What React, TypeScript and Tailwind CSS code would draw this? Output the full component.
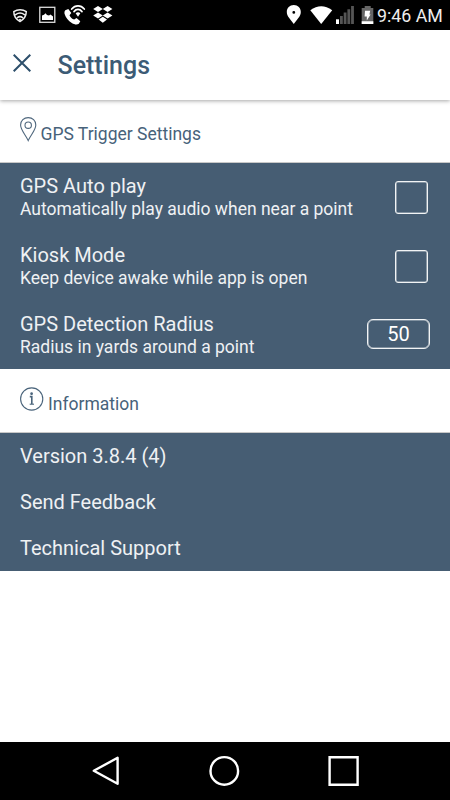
import React from "react";

function StatusBar() {
  return (
    <div className="flex h-[30px] shrink-0 bg-black">
      <svg width="375" height="30" viewBox="0 0 375 30" className="shrink-0">
        {/* shield with signal arcs */}
        <g fill="none" stroke="#eee" strokeWidth="1.5" strokeLinecap="round">
          <path d="M13.8 11.6C17.5 9 22.7 9 26.3 11.6C26.2 16 24.2 19.4 20 21.5C15.8 19.4 13.8 16 13.8 11.6Z" />
          <path d="M15.6 14.6C18.3 12.7 21.7 12.7 24.4 14.6M17.4 17.6C19 16.4 21 16.4 22.6 17.6" />
        </g>
        <circle cx="20" cy="19.7" r="1" fill="#eee" />
        {/* picture */}
        <rect x="39.8" y="7.3" width="15" height="15" fill="none" stroke="#ddd" strokeWidth="1.3" />
        <path d="M42 20V15.5L44 14.7L45.5 13.2L47 15L49 15.5L50.5 14.5L53 16.5V20Z" fill="#fff" />
        {/* wifi call */}
        <path d="M65.3 10.2L68.3 9L71.3 13L69.5 15.2C70.5 17.3 72 18.8 74.2 19.6L76.5 18L80.3 21.2L78.8 23.8C77 25 74.5 24.6 71.8 23C68.5 21 65.5 17.3 64.6 14C64.3 12.4 64.5 11 65.3 10.2Z" fill="#fff" />
        <g fill="none" stroke="#fff" strokeWidth="1.7" strokeLinecap="round">
          <path d="M71.7 9C75.2 4.8 80.8 4.8 84.3 9M74 11.6C76.3 8.7 79.7 8.7 82 11.6" />
        </g>
        <path d="M75.6 13.3Q78 11.2 80.4 13.3L78 16.8Z" fill="#fff" />
        {/* dropbox */}
        <path d="M98 6L102.8 9L98 12L93.2 9ZM107.6 6L112.4 9L107.6 12L102.8 9ZM98 12.4L102.8 15.4L98 18.4L93.2 15.4ZM107.6 12.4L112.4 15.4L107.6 18.4L102.8 15.4ZM102.8 16.7L107 19.6L102.8 22.7L98.6 19.6Z" fill="#fff" />
        {/* location */}
        <path fillRule="evenodd" d="M293.8 5C289.7 5 286.8 8 286.8 11.9C286.8 16.5 291 19.5 293.8 24C296.6 19.5 300.8 16.5 300.8 11.9C300.8 8 297.9 5 293.8 5ZM293.8 11A1.4 1.4 0 1 1 293.8 13.8A1.4 1.4 0 1 1 293.8 11Z" fill="#fff" />
        {/* wifi */}
        <path d="M310.3 10.3Q321.2 2 332.2 10.3L321.2 24Z" fill="#fff" />
        {/* cell signal */}
        <path d="M336 19.3h3V24h-3Z" fill="#fff" />
        <path d="M340 16h2.8v8H340ZM343.7 12.6h2.8V24h-2.8ZM347.4 9.3h2.8V24h-2.8ZM351.1 6h2.8v18h-2.8Z" fill="#555" />
        {/* charging battery */}
        <path d="M364.7 6h6v2h2.6v16h-11.6V8h3Z" fill="#666" />
        <path d="M361.7 21.2h11.6V24h-11.6ZM365 10.7h5.2l-.8 3.8h1.2l-3.8 6v-4h-2.2Z" fill="#fff" />
      </svg>
      <span className="whitespace-nowrap pl-[2px] text-[17.8px] leading-[32px] text-[#eee]">9:46 AM</span>
    </div>
  );
}

function Row({ title, sub, children }: { title: string; sub: string; children: React.ReactNode }) {
  return (
    <div className="flex h-[69px] items-start justify-between pl-5 pr-[20px] pt-[10.8px]">
      <div className="whitespace-nowrap text-[#eff1f3]">
        <div className="text-[20px] leading-[24px]">{title}</div>
        <div className="text-[17.5px] leading-[23px]">{sub}</div>
      </div>
      {children}
    </div>
  );
}

function Checkbox() {
  return <div className="mr-[2px] mt-[7px] size-[33px] rounded-[3px] border border-[#f2f4f5] shadow-[inset_0_0_0_0.6px_#f2f4f5b0]" />;
}

export default function App() {
  return (
    <div className="flex h-[800px] w-[450px] flex-col overflow-hidden bg-white font-['Roboto',sans-serif]">
      <StatusBar />
      <header className="z-10 flex h-[70px] shrink-0 items-center bg-white shadow-[0_1px_4px_rgba(0,0,0,0.35)]">
        <svg width="18" height="18" viewBox="0 0 18 18" className="ml-[13px] mt-[-4px]">
          <path d="M.7 .7L17.3 17.3M17.3 .7L.7 17.3" stroke="#2d4f6b" strokeWidth="2" />
        </svg>
        <h1 className="ml-[26.5px] mt-px text-[25px] font-medium leading-[30px] text-[#3c5b75]">Settings</h1>
      </header>
      <section className="flex h-[63px] shrink-0 border-b border-[#c8c8c8] pl-5 pt-[17px]">
        <svg width="17" height="25" viewBox="0 0 17 25" fill="none" stroke="#4f677d" strokeWidth="1.1">
          <path d="M8.2 .6C3.9 .6 .6 3.8 .6 8C.6 13 5.5 17.5 8.2 23.6C10.9 17.5 15.8 13 15.8 8C15.8 3.8 12.5 .6 8.2 .6Z" />
          <circle cx="8.2" cy="8.2" r="3.2" />
        </svg>
        <h2 className="ml-[3.5px] mt-[6px] text-[17.5px] leading-[22px] text-[#47627a]">GPS Trigger Settings</h2>
      </section>
      <main className="h-[206px] shrink-0 bg-[#465d73]">
        <Row title="GPS Auto play" sub="Automatically play audio when near a point"><Checkbox /></Row>
        <Row title="Kiosk Mode" sub="Keep device awake while app is open"><Checkbox /></Row>
        <Row title="GPS Detection Radius" sub="Radius in yards around a point">
          <div className="mt-[7.5px] h-[30px] w-[63px] rounded-[6px] border border-[#f2f4f5] text-center text-[20px] leading-[28px] text-white shadow-[inset_0_0_0_0.6px_#f2f4f5b0]">50</div>
        </Row>
      </main>
      <section className="flex h-[64px] shrink-0 border-b border-[#c8c8c8] pl-5 pt-[18px]">
        <svg width="24" height="25" viewBox="0 0 24 25" fill="none" stroke="#4a647b" strokeWidth="1.1">
          <circle cx="11.7" cy="12" r="11.1" />
          <path d="M9.8 9.6H11.8V17" strokeWidth="1.6" />
          <path d="M9.7 17.2H14" />
          <circle cx="11.6" cy="6.7" r=".8" fill="#4a647b" />
        </svg>
        <h2 className="ml-[4px] mt-[6px] text-[17.5px] leading-[22px] text-[#47627a]">Information</h2>
      </section>
      <nav className="h-[138px] shrink-0 bg-[#465d73] pl-5 text-[20px] leading-[46.3px] text-[#eff1f3]">
        <div className="h-[46.1px]">Version 3.8.4 (4)</div>
        <div className="h-[46.1px]">Send Feedback</div>
        <div className="h-[46.1px]">Technical Support</div>
      </nav>
      <div className="flex-1" />
      <footer className="h-[58px] shrink-0 bg-black">
        <svg width="450" height="58" viewBox="0 0 450 58" fill="none" stroke="#fff" strokeWidth="2.4">
          <path d="M117.6 15.8V41.8L93.8 28.8Z" strokeLinejoin="round" />
          <circle cx="224.3" cy="28.9" r="13.8" />
          <path d="M329.6 15.2H357.6V42.8H329.6Z" />
        </svg>
      </footer>
    </div>
  );
}
